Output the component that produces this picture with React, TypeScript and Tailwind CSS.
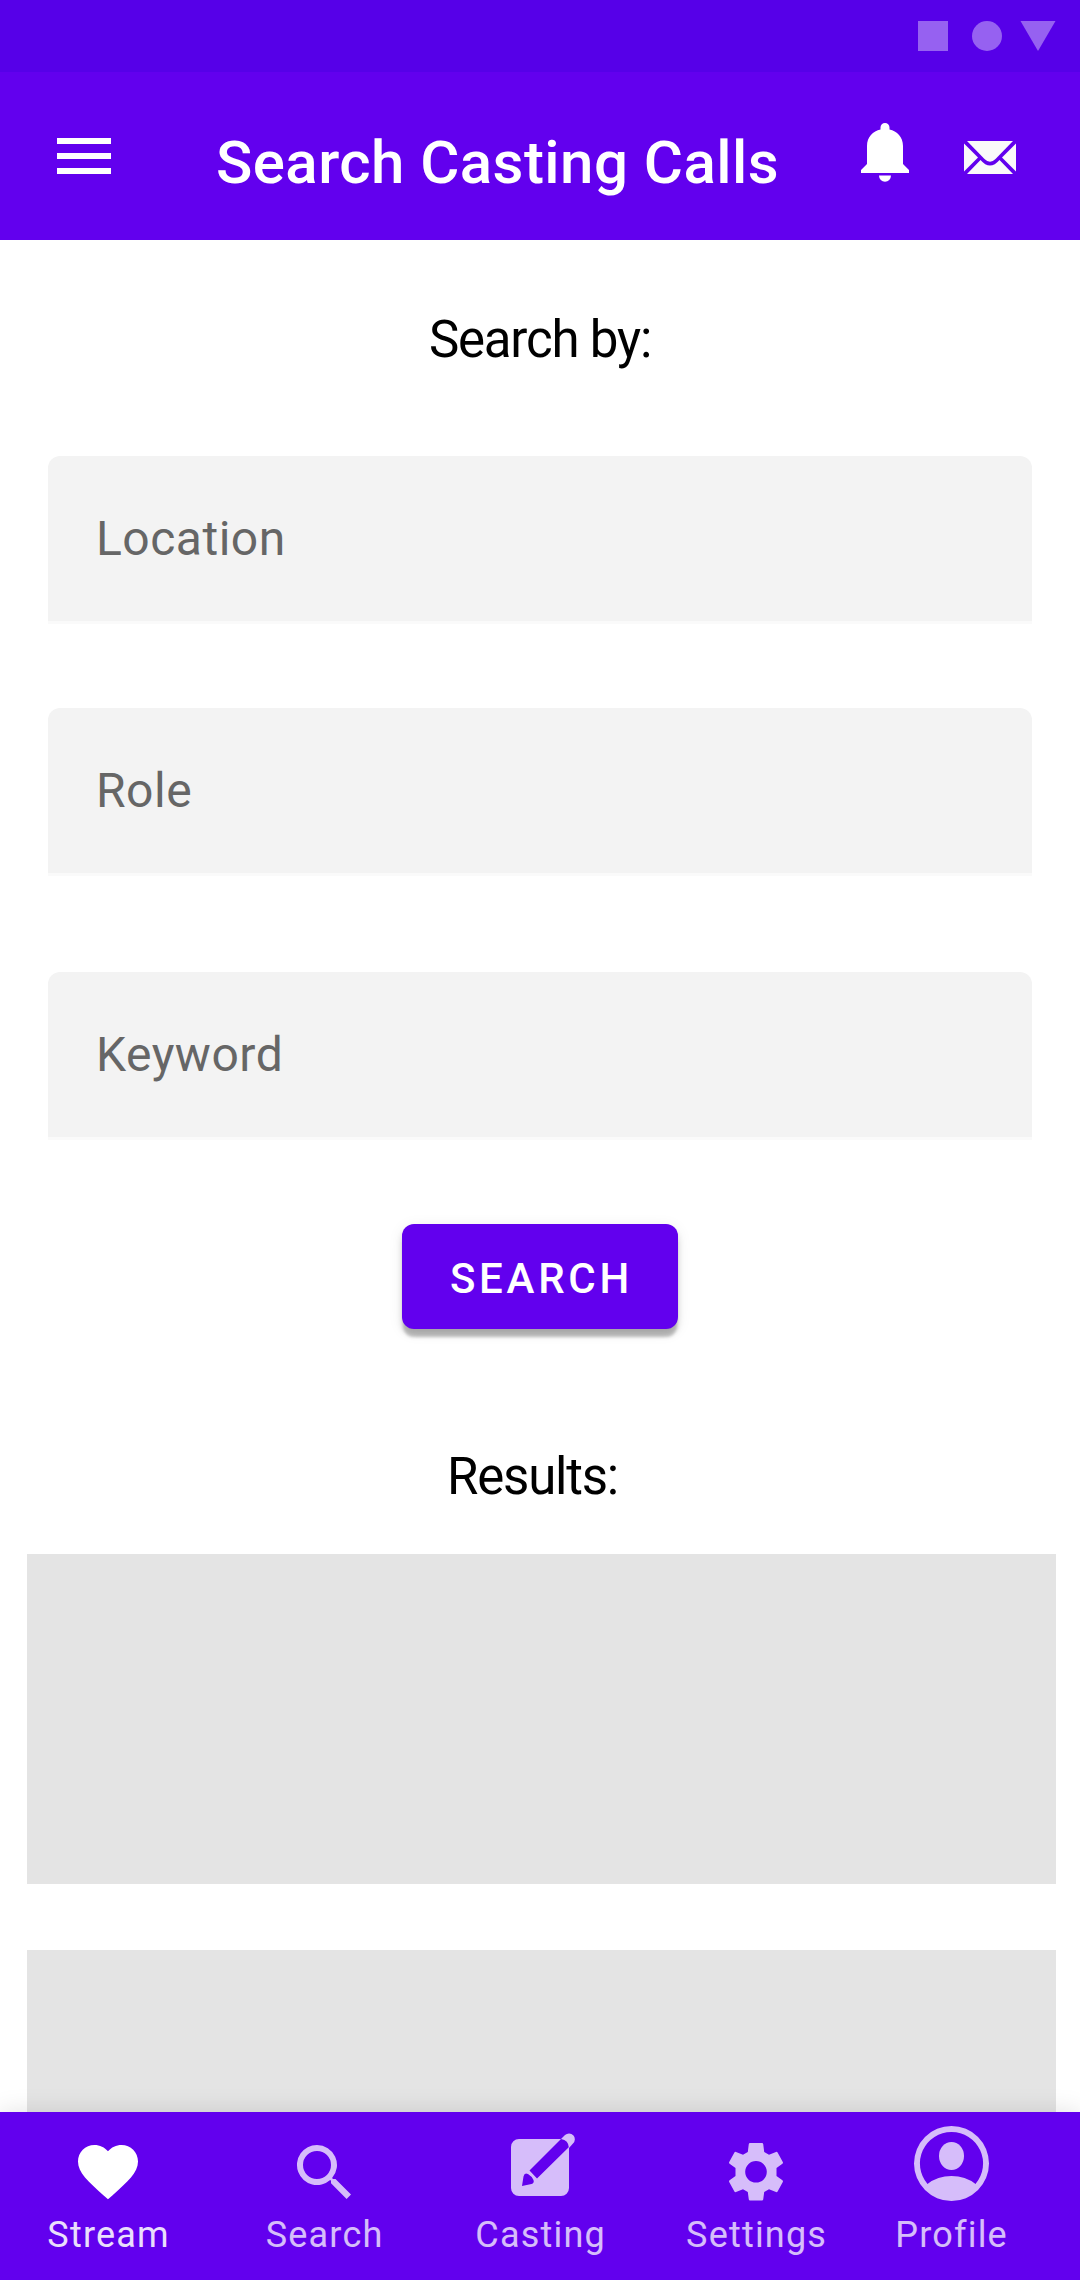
import type { ReactNode } from 'react';
import { clsx } from 'clsx';

const fields = [
  { name: 'Location', gap: 'mt-0' },
  { name: 'Role', gap: 'mt-[84px]' },
  { name: 'Keyword', gap: 'mt-[96px]' },
];

function StatusBar() {
  return (
    <div className="flex h-[72px] items-center justify-end bg-[#5600e8] pr-6">
      <svg width="138" height="30" viewBox="0 0 138 30" fill="#fff" fillOpacity=".38">
        <path d="M0 0h30v30H0z" />
        <circle cx="69" cy="15" r="15" />
        <path d="M102.500 0h35L120 30z" />
      </svg>
    </div>
  );
}

function AppBar() {
  return (
    <header className="flex h-[168px] bg-[#6200ee] pl-12 text-white">
      <button className="mt-12 h-[72px] w-[72px]" aria-label="Menu">
        <svg width="72" height="72" viewBox="0 0 24 24" fill="currentColor">
          <path d="M3 18h18v-2H3v2zm0-5h18v-2H3v2zm0-7v2h18V6H3z" />
        </svg>
      </button>
      <h1 className="ml-24 mt-[55px] w-[645px] whitespace-nowrap text-[60px] font-medium leading-[72px] tracking-[0.45px]">
        Search Casting Calls
      </h1>
      <svg className="mt-[51px] shrink-0" width="48" height="59" viewBox="0 0 48 59" fill="currentColor">
        <path d="M0 50v-3l6-6V23C6 14 12 8 19.500 6.500V4.500a4.500 4.500 0 0 1 9 0v2C36 8 42 14 42 23v18l6 6v3z" />
        <path d="M18 52.500h12a6 6.200 0 0 1-12 0z" />
      </svg>
      <svg className="ml-[55px] mt-[69px] shrink-0" width="52" height="33" viewBox="0 0 52 33" fill="#fafafa">
        <path d="M3 0h46L31.500 18q-5.500 5.500-11 0z" />
        <path d="M0 2.500 14 16.500 0 30.500z" />
        <path d="M52 2.500 38 16.500l14 14z" />
        <path d="M3 33 16.500 19q9.500 11 19 0L49 33z" />
      </svg>
    </header>
  );
}

function Field({ name, gap }: { name: string; gap: string }) {
  return (
    <div
      className={clsx(
        'h-[168px] shrink-0 rounded-t-xl border-b-[3px] border-[#fafafa] bg-[#f3f3f3] pl-12 pt-[55px] text-5xl/[56px] tracking-[0.5px] text-[#666]',
        gap
      )}
    >
      {name}
    </div>
  );
}

function NavItem({ label, active, className, children }: { label: string; active?: boolean; className?: string; children: ReactNode }) {
  return (
    <a className={clsx('flex w-[216px] shrink-0 flex-col items-center text-white', className)}>
      <span className={clsx('flex h-[102px] items-end justify-center', !active && 'opacity-[.74]')}>{children}</span>
      <span className={clsx('-mt-[3px] pl-[1.2px] text-4xl/[48px] tracking-[1.2px]', active ? 'opacity-[.87]' : 'opacity-[.74]')}>{label}</span>
    </a>
  );
}

function BottomNav() {
  return (
    <nav className="relative flex h-[168px] shrink-0 bg-[#6200ee] shadow-[0_0_24px_rgba(0,0,0,0.12)]">
      <NavItem label="Stream" active>
        <svg className="mb-1.5" width="72" height="72" viewBox="0 0 24 24" fill="currentColor">
          <path d="M12 21.100l-1.450-1.300C5.400 15.200 2 12.200 2 8.500 2 5.420 4.420 3 7.500 3c1.740 0 3.410.81 4.500 2.090C13.090 3.810 14.760 3 16.500 3 19.580 3 22 5.420 22 8.500c0 3.700-3.400 6.700-8.550 11.300L12 21.100z" />
        </svg>
      </NavItem>
      <NavItem label="Search">
        <svg className="mb-1.5" width="72" height="72" viewBox="0 0 72 72" fill="currentColor">
          <path d="M29 9a20 20 0 1 0 13.200 35l.8.800v2.400L58.600 63l4.400-4.400L47.500 43H45l-.9-.9A20 20 0 0 0 29 9zm0 6a14 14 0 1 1 0 28 14 14 0 0 1 0-28z" fillRule="evenodd" />
        </svg>
      </NavItem>
      <NavItem label="Casting">
        <svg className="mb-[18px] ml-1.5" width="65" height="63" viewBox="0 0 65 63" fill="currentColor">
          <path
            fillRule="evenodd"
            d="M8 6h42L18.500 37.500l7.500 8L58 14v41a8 8 0 0 1-8 8H8a8 8 0 0 1-8-8V14a8 8 0 0 1 8-8zM11 53l1.500-9.500q1-4.500 4.500-2.500 3.500 2 5.500 6 1 3-2 4z"
          />
          <path d="M50 6l4-4a5.800 5.800 0 0 1 8 8.500L58 15q-.5-8-8-9z" />
        </svg>
      </NavItem>
      <NavItem label="Settings">
        <svg className="mb-[13px]" width="54" height="58" viewBox="0 0 54 58" fill="currentColor">
          <path
            fillRule="evenodd"
            d="M21 0h12q1 0 1.200 1l1 8 4.800 2.700 7-2.800q1-.4 1.600.6L53.800 19q.5 1-.4 1.700L47.500 25v8l5.900 4.300q.9.700.4 1.700l-5.200 9.500q-.6 1-1.600.6l-7-2.800-4.800 2.700-1 7.500q-.2 1-1.200 1H21q-1 0-1.200-1l-1-7.500-4.800-2.700-7 2.800q-1 .4-1.600-.6L.2 39q-.5-1 .4-1.700L6.500 33v-8L.6 20.700Q-.3 20 .2 19l5.200-9.500q.6-1 1.600-.6l7 2.800L18.800 9l1-8Q20 0 21 0zm6 18a10.800 10.800 0 1 0 0 21.600A10.800 10.800 0 0 0 27 18z"
          />
        </svg>
      </NavItem>
      <NavItem label="Profile" className="-ml-[21px]">
        <svg className="mb-[13px]" width="75" height="75" viewBox="0 0 75 75" fill="currentColor">
          <path fillRule="evenodd" d="M37.500 0a37.500 37.500 0 1 0 0 75 37.500 37.500 0 0 0 0-75zm0 6a31.500 31.500 0 0 1 24 52q-10-8-24-8t-24 8a31.500 31.500 0 0 1 24-52z" />
          <ellipse cx="37.500" cy="30" rx="12.500" ry="14" />
        </svg>
      </NavItem>
    </nav>
  );
}

export default function App() {
  return (
    <div className="flex h-[2280px] w-[1080px] flex-col overflow-hidden bg-white font-['Roboto',sans-serif]">
      <StatusBar />
      <AppBar />
      <main className="flex min-h-0 flex-1 flex-col overflow-hidden">
        <h2 className="mt-[70px] text-center text-[51px]/[60px] tracking-[-1.2px] text-black">Search by:</h2>
        <form className="mt-[86px] flex flex-col px-12">
          {fields.map((field) => (
            <Field key={field.name} name={field.name} gap={field.gap} />
          ))}
          <button
            type="button"
            className="mt-[84px] h-[105px] w-[276px] self-center rounded-xl bg-[#6200ee] pt-[3px] pl-[3px] text-[42px] font-medium tracking-[3.75px] text-white shadow-[0_9px_3px_-1px_rgba(0,0,0,0.2),0_6px_6px_rgba(0,0,0,0.14),0_3px_15px_rgba(0,0,0,0.08)]"
          >
            SEARCH
          </button>
        </form>
        <h2 className="mt-[118px] -ml-[15px] text-center text-[51px]/[60px] tracking-[-1.2px] text-black">Results:</h2>
        <div className="mt-[47px] ml-[27px] h-[330px] w-[1029px] shrink-0 bg-[#e4e4e4]" />
        <div className="mt-[66px] ml-[27px] h-[330px] w-[1029px] shrink-0 bg-[#e4e4e4]" />
      </main>
      <BottomNav />
    </div>
  );
}
